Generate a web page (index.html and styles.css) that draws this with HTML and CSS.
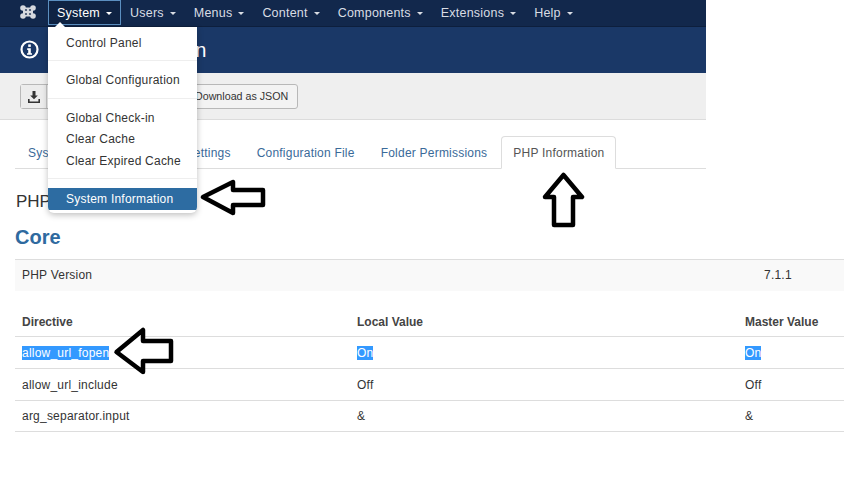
FILE: index.html
```html
<!DOCTYPE html>
<html lang="en">
<head>
<meta charset="utf-8">
<title>System Information</title>
<link rel="stylesheet" href="styles.css">
</head>
<body>
<div class="shell">
  <nav class="navbar">
    <svg class="logo" viewBox="0 0 16 14" width="16" height="14"><g fill="#d6d9de"><circle cx="3" cy="3" r="2.800"/><circle cx="13" cy="3" r="2.800"/><circle cx="3" cy="11" r="2.800"/><circle cx="13" cy="11" r="2.800"/><rect x="3" y="2.500" width="10" height="9"/></g><g fill="#3a4a66"><circle cx="6" cy="5" r="1.100"/><circle cx="10" cy="5" r="1.100"/><circle cx="6" cy="9" r="1.100"/><circle cx="10" cy="9" r="1.100"/></g></svg>
    <ul class="menu">
      <li class="menu-item active">System<b class="caret"></b></li>
      <li class="menu-item">Users<b class="caret"></b></li>
      <li class="menu-item">Menus<b class="caret"></b></li>
      <li class="menu-item">Content<b class="caret"></b></li>
      <li class="menu-item">Components<b class="caret"></b></li>
      <li class="menu-item">Extensions<b class="caret"></b></li>
      <li class="menu-item">Help<b class="caret"></b></li>
    </ul>
  </nav>
  <header class="title-bar">
    <svg class="info" viewBox="0 0 20 20" width="20" height="20"><circle cx="9.500" cy="9.500" r="8" fill="none" stroke="#fff" stroke-width="2.200"/><rect x="8.200" y="4.400" width="2.600" height="2.500" fill="#fff"/><path d="M7.200 8.200h3.600v5h1.200v1.600H7v-1.600h1.200V9.900h-1z" fill="#fff"/></svg>
    <h1>PHP Information</h1>
  </header>
  <div class="toolbar">
    <button class="btn"><span class="btn-icon"><svg viewBox="0 0 12 12" width="12" height="12"><path d="M4.500 0h3v4.500h2.300L6 8.300 2.200 4.500h2.300z" fill="#333"/><path d="M.8 8v3.200h10.400V8" fill="none" stroke="#333" stroke-width="1.600"/></svg></span><span class="btn-text">Download as text</span></button>
    <button class="btn"><span class="btn-icon"><svg viewBox="0 0 12 12" width="12" height="12"><path d="M4.500 0h3v4.500h2.300L6 8.300 2.200 4.500h2.300z" fill="#333"/><path d="M.8 8v3.200h10.400V8" fill="none" stroke="#333" stroke-width="1.600"/></svg></span><span class="btn-text">Download as JSON</span></button>
  </div>
  <ul class="tabs">
    <li class="tab">System Information</li>
    <li class="tab">PHP Settings</li>
    <li class="tab">Configuration File</li>
    <li class="tab">Folder Permissions</li>
    <li class="tab current">PHP Information</li>
  </ul>
</div>
<main class="content">
  <h2 class="section-title">PHP Information</h2>
  <h3 class="core">Core</h3>
  <table class="info-table version">
    <tr><td class="c1">PHP Version</td><td class="c-ver">7.1.1</td></tr>
  </table>
  <table class="info-table directives">
    <thead><tr><th class="c1">Directive</th><th class="c2">Local Value</th><th class="c3">Master Value</th></tr></thead>
    <tbody>
      <tr><td><span class="sel">allow_url_fopen</span></td><td><span class="sel">On</span></td><td><span class="sel">On</span></td></tr>
      <tr><td>allow_url_include</td><td>Off</td><td>Off</td></tr>
      <tr><td>arg_separator.input</td><td>&amp;</td><td>&amp;</td></tr>
    </tbody>
  </table>
</main>

<ul class="dropdown">
  <li class="dd-item">Control Panel</li>
  <li class="dd-div"></li>
  <li class="dd-item">Global Configuration</li>
  <li class="dd-div"></li>
  <li class="dd-item">Global Check-in</li>
  <li class="dd-item">Clear Cache</li>
  <li class="dd-item">Clear Expired Cache</li>
  <li class="dd-div"></li>
  <li class="dd-item selected">System Information</li>
</ul>
<i class="notch"></i>

<svg class="arrow a1" viewBox="0 0 66 40" width="66" height="40"><path d="M3 19 33 4v8h30v15H33v8z" fill="#fff" stroke="#000" stroke-width="4.500" stroke-linejoin="round"/></svg>
<svg class="arrow a2" viewBox="0 0 44 58" width="44" height="58"><path d="M22.500 5 41 27h-9v28H13V27H4z" fill="#fff" stroke="#000" stroke-width="4.500" stroke-linejoin="round"/></svg>
<svg class="arrow a3" viewBox="0 0 62 50" width="62" height="50"><path d="M3.500 26 30 4v11h28v20H30v11z" fill="#fff" stroke="#000" stroke-width="4.500" stroke-linejoin="round"/></svg>
</body>
</html>
```
FILE: styles.css
```css
* { box-sizing: border-box; }
html, body { margin: 0; padding: 0; }
body {
  width: 844px;
  height: 500px;
  overflow: hidden;
  background: #fff;
  font-family: "Liberation Sans", Arial, sans-serif;
  font-size: 12px;
  letter-spacing: 0.22px;
  color: #333;
  position: relative;
}
ul { list-style: none; margin: 0; padding: 0; }
.shell { width: 706px; }
.navbar {
  height: 27px;
  background: #12284c;
  border-bottom: 1px solid #0d1f3d;
  display: flex;
  align-items: flex-start;
}
.logo { margin: 5px 0 0 20px; flex: none; }
.menu { display: flex; margin-left: 12px; }
.menu-item {
  height: 25px;
  line-height: 24px;
  padding: 0 8px;
  color: #d9dde4;
  font-size: 12.500px;
  border: 1px solid transparent;
  white-space: nowrap;
}
.menu-item.active {
  color: #fff;
  border-color: #5b8fc0;
  background: #0f2343;
}
.caret {
  display: inline-block;
  margin-left: 6px;
  vertical-align: middle;
  border-top: 3px solid currentColor;
  border-left: 3px solid transparent;
  border-right: 3px solid transparent;
}
.title-bar {
  height: 46px;
  background: #1a3867;
  display: flex;
  align-items: center;
  padding-left: 20px;
}
.info { flex: none; margin-bottom: 1px; }
.title-bar h1 {
  margin: 0 0 0 20px;
  font-size: 20px;
  font-weight: 400;
  letter-spacing: 0;
  color: #fff;
  white-space: nowrap;
}
.toolbar {
  height: 47px;
  background: #efefef;
  border-bottom: 1px solid #dcdcdc;
  padding: 11px 0 0 20px;
  display: flex;
  gap: 11px;
}
.btn {
  display: flex;
  align-items: stretch;
  height: 25px;
  padding: 0;
  border: 1px solid #b8b8b8;
  border-radius: 3px;
  background: #f3f3f3;
  font: 10.700px "Liberation Sans", Arial, sans-serif;
  color: #333;
}
.btn-icon {
  width: 26px;
  background: #ececec;
  border-right: 1px solid #c8c8c8;
  display: flex;
  align-items: center;
  justify-content: center;
}
.btn-text { padding: 0 9px; line-height: 23px; white-space: nowrap; }
.tabs {
  display: flex;
  height: 33px;
  margin: 16px 0 0 15px;
  padding-left: 1px;
  border-bottom: 1px solid #ddd;
  gap: 2px;
}
.tab {
  height: 32px;
  padding: 0 12px;
  line-height: 34px;
  color: #3a6a99;
  white-space: nowrap;
}
.tab:first-child { padding-right: 7.500px; }
.tab.current {
  height: 33px;
  color: #555;
  background: #fff;
  border: 1px solid #ddd;
  border-bottom-color: #fff;
  border-radius: 4px 4px 0 0;
  padding: 0 11px;
  line-height: 33px;
}
.content { margin-left: 15px; }
.section-title {
  margin: 23px 0 0 1px;
  font-size: 17px;
  line-height: 20px;
  font-weight: 400;
  letter-spacing: 0;
  color: #333;
}
.core {
  margin: 13px 0 0;
  font-size: 20px;
  line-height: 24px;
  font-weight: 700;
  letter-spacing: 0;
  color: #2f6a9f;
}
.info-table {
  width: 829px;
  border-collapse: collapse;
  table-layout: fixed;
}
.info-table td, .info-table th {
  padding: 0 0 0 7px;
  text-align: left;
  vertical-align: middle;
}
.version { margin-top: 10px; background: #f9f9f9; }
.version tr { height: 31px; border-top: 1px solid #ddd; }
.version .c-ver { width: 87px; }
.directives { margin-top: 18px; }
.directives thead tr { height: 28px; }
.directives .c1 { width: 335px; }
.directives .c2 { width: 388px; }
.directives th { color: #444; letter-spacing: 0; }
.directives tbody tr { height: 32px; border-top: 1px solid #ddd; }
.directives tbody tr:last-child { height: 31px; border-bottom: 1px solid #ddd; }
.sel { background: #3399ff; color: #fff; }
.dropdown {
  position: absolute;
  left: 48px;
  top: 27px;
  width: 149px;
  height: 186px;
  background: #fff;
  border-radius: 0 0 6px 6px;
  box-shadow: 0 2px 6px rgba(0, 0, 0, 0.25);
  padding-top: 5.500px;
  overflow: hidden;
}
.dd-item {
  height: 21.500px;
  line-height: 21px;
  padding-left: 18px;
  color: #333;
  white-space: nowrap;
}
.dd-div { height: 1px; background: #eee; margin: 6px 0 9px; }
.dd-item.selected { background: #2d6ca2; color: #fff; line-height: 22px; }
.notch {
  position: absolute;
  left: 55px;
  top: 22px;
  border-bottom: 5px solid #fff;
  border-left: 5px solid transparent;
  border-right: 5px solid transparent;
}
.arrow { position: absolute; }
.a1 { left: 200px; top: 178px; }
.a2 { left: 541px; top: 170px; }
.a3 { left: 113px; top: 326px; }
```
